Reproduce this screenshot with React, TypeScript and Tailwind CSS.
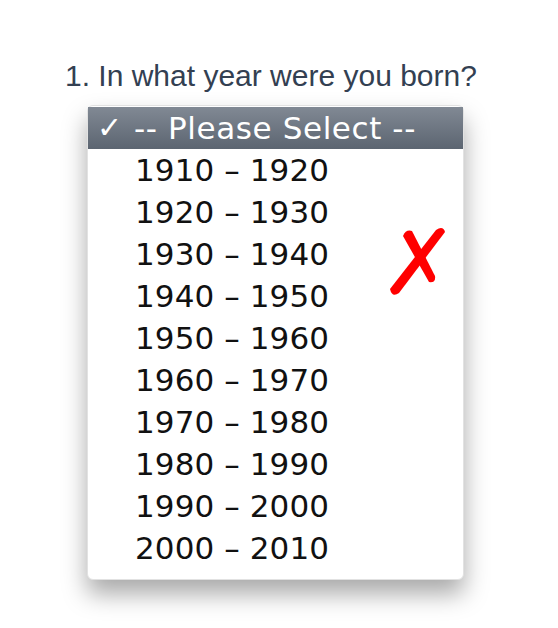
import React from "react";

const ranges = [
  "1910 – 1920",
  "1920 – 1930",
  "1930 – 1940",
  "1940 – 1950",
  "1950 – 1960",
  "1960 – 1970",
  "1970 – 1980",
  "1980 – 1990",
  "1990 – 2000",
  "2000 – 2010",
];

export default function App() {
  return (
    <div className="relative w-[558px] h-[628px] bg-white overflow-hidden">
      <p
        className="pt-[58px] pl-[65px] text-[30px] leading-[36px] text-[#334052] whitespace-nowrap"
        style={{ fontFamily: '"Liberation Sans", Arial, sans-serif' }}
      >
        1. In what year were you born?
      </p>
      <div
        className="mt-[11px] ml-[87px] w-[377px] h-[475px] rounded-[6px] bg-white border border-[#e2e2e2] pt-[1px] shadow-[0_14px_24px_rgba(0,0,0,0.34)]"
        style={{ fontFamily: '"DejaVu Sans", "Lucida Grande", sans-serif' }}
      >
        <div className="flex items-center h-[42px] bg-gradient-to-b from-[#818994] to-[#5c6571] text-white text-[31px]">
          <span className="w-[46px] pl-[9px] text-[30px] font-bold leading-none">✓</span>
          <span className="tracking-[0.6px]">-- Please Select --</span>
        </div>
        {ranges.map((r) => (
          <div
            key={r}
            className="flex items-center h-[42px] pl-[47px] text-[31px] text-[#111111] tracking-[0.1px]"
          >
            {r}
          </div>
        ))}
      </div>
      <svg
        className="absolute left-0 top-0"
        width="558"
        height="628"
        viewBox="0 0 558 628"
      >
        <path
          d="M403 236 Q406 229 412 231 L435 276 Q436 283 429 282 Z"
          fill="#ff0000"
        />
        <path
          d="M436 230 Q443 225 445 232 L399 293 Q392 298 390 289 Z"
          fill="#ff0000"
        />
      </svg>
    </div>
  );
}
